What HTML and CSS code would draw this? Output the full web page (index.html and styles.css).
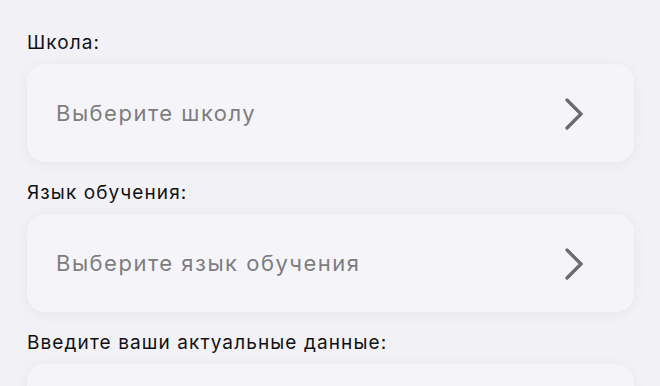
FILE: index.html
```html
<!DOCTYPE html>
<html lang="ru">
<head>
<meta charset="utf-8">
<link rel="stylesheet" href="styles.css">
</head>
<body>
<main class="form">
  <section class="field">
    <div class="label">Школа:</div>
    <div class="select">
      <span class="placeholder">Выберите школу</span>
      <svg class="chev" width="20" height="32" viewBox="0 0 20 32"><path d="M3 2 L17 16 L3 30" fill="none" stroke="#6b6b6e" stroke-width="3.3" stroke-linecap="round" stroke-linejoin="miter"/></svg>
    </div>
  </section>
  <section class="field">
    <div class="label">Язык обучения:</div>
    <div class="select">
      <span class="placeholder">Выберите язык обучения</span>
      <svg class="chev" width="20" height="32" viewBox="0 0 20 32"><path d="M3 2 L17 16 L3 30" fill="none" stroke="#6b6b6e" stroke-width="3.3" stroke-linecap="round" stroke-linejoin="miter"/></svg>
    </div>
  </section>
  <section class="field">
    <div class="label">Введите ваши актуальные данные:</div>
    <div class="select"></div>
  </section>
</main>
</body>
</html>
```

FILE: styles.css
```css
html, body {
  margin: 0;
  padding: 0;
  background: #f2f2f6;
  height: 100%;
  overflow: hidden;
}
body {
  font-family: Inter, "Noto Sans", sans-serif;
}
.form {
  display: flex;
  flex-direction: column;
  gap: 19px;
  padding: 31px 27px 0 27px;
}
.field {
  display: flex;
  flex-direction: column;
  gap: 9px;
}
.label {
  font-size: 19px;
  line-height: 24px;
  color: #111113;
  letter-spacing: 1.1px;
}
.select {
  height: 98px;
  border-radius: 18px;
  background: #f5f5f9;
  box-shadow: 0 2px 14px rgba(0, 0, 0, 0.05);
  display: flex;
  align-items: center;
  justify-content: space-between;
  padding: 0 50px 0 29px;
  margin-right: -1px;
}
.placeholder {
  font-size: 22px;
  color: #7d7d80;
  letter-spacing: 1.5px;
}
.chev {
  display: block;
  margin-top: 2px;
}
```
